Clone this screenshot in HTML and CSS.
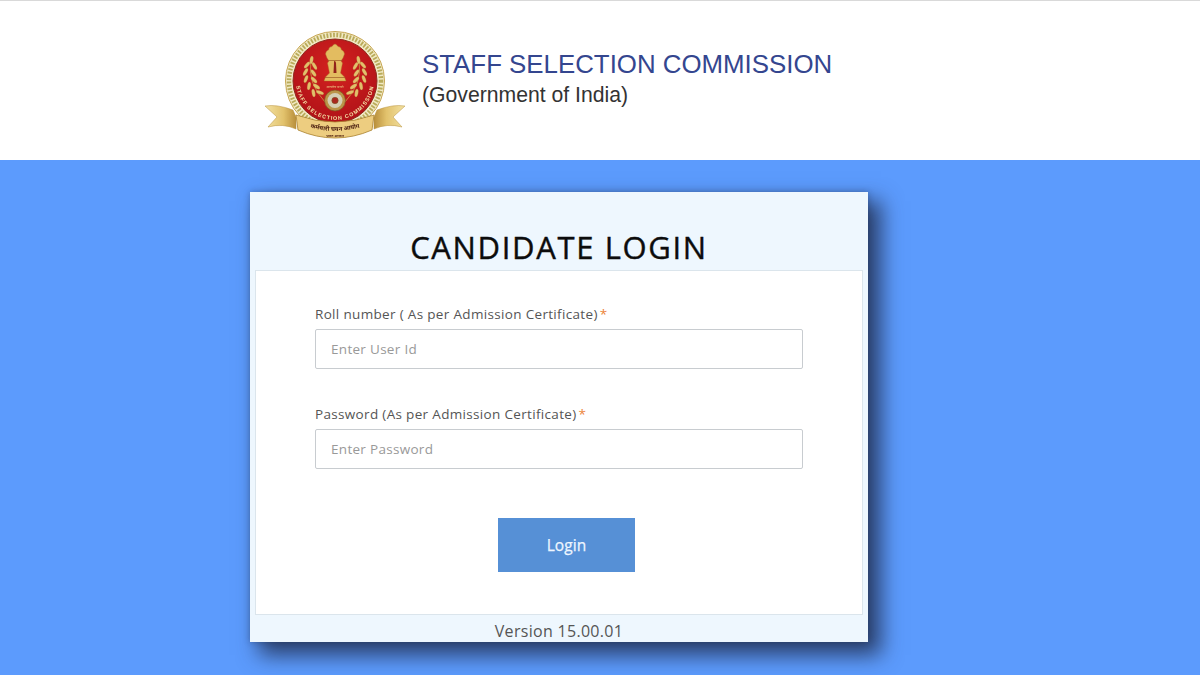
FILE: index.html
```html
<!DOCTYPE html>
<html lang="en">
<head>
<meta charset="utf-8">
<title>Candidate Login</title>
<link rel="stylesheet" href="styles.css">
</head>
<body>
<header class="site-header">
  <svg class="logo" viewBox="0 0 140 110" width="140" height="110" aria-label="SSC emblem">
    <defs>
      <path id="arcText" d="M31 50 A39 39 0 0 0 109 50"/>
      <path id="ribbonText" d="M38 94 Q70 106 102 94"/>
      <radialGradient id="red" cx="50%" cy="35%" r="65%"><stop offset="0" stop-color="#d4211f"/><stop offset="1" stop-color="#b01218"/></radialGradient>
      <linearGradient id="tailL" x1="0" x2="1" y1="0" y2="0"><stop offset="0" stop-color="#f3e2a4"/><stop offset=".6" stop-color="#e2c26c"/><stop offset="1" stop-color="#b98f3c"/></linearGradient>
      <linearGradient id="tailR" x1="1" x2="0" y1="0" y2="0"><stop offset="0" stop-color="#f3e2a4"/><stop offset=".6" stop-color="#e2c26c"/><stop offset="1" stop-color="#b98f3c"/></linearGradient>
      <g id="wreath">
        <path d="M46 29 Q42 52 60 71" fill="none" stroke="#c99a45" stroke-width=".8"/>
        <g fill="#e2c06c" stroke="#a8752c" stroke-width=".2">
          <ellipse cx="46.500" cy="29" rx="4" ry="1.700" transform="rotate(-80 46.500 29)"/>
          <ellipse cx="42" cy="34" rx="4" ry="1.700" transform="rotate(-50 42 34)"/>
          <ellipse cx="49.500" cy="35" rx="4" ry="1.700" transform="rotate(-120 49.500 35)"/>
          <ellipse cx="40.500" cy="41" rx="4" ry="1.700" transform="rotate(-60 40.500 41)"/>
          <ellipse cx="48.500" cy="42" rx="4" ry="1.700" transform="rotate(-125 48.500 42)"/>
          <ellipse cx="41" cy="48" rx="4" ry="1.700" transform="rotate(-70 41 48)"/>
          <ellipse cx="49" cy="49" rx="4" ry="1.700" transform="rotate(-135 49 49)"/>
          <ellipse cx="44" cy="55" rx="4" ry="1.700" transform="rotate(-80 44 55)"/>
          <ellipse cx="51.500" cy="55.500" rx="4" ry="1.700" transform="rotate(-145 51.500 55.500)"/>
          <ellipse cx="48.500" cy="62" rx="4" ry="1.700" transform="rotate(-100 48.500 62)"/>
          <ellipse cx="55" cy="61.500" rx="4" ry="1.700" transform="rotate(-160 55 61.500)"/>
        </g>
      </g>
    </defs>
    <circle cx="70" cy="50" r="49.500" fill="#f1e9c4" stroke="#c6a552" stroke-width="1"/>
    <circle cx="70" cy="50" r="46" fill="none" stroke="#b9ab5a" stroke-width="4.500" stroke-dasharray="1.800 1.500"/>
    <circle cx="70" cy="50" r="42" fill="url(#red)" stroke="#8e2a1e" stroke-width="1"/>
    <use href="#wreath"/>
    <use href="#wreath" transform="translate(140 0) scale(-1 1)"/>
    <path class="capital" d="M62 27 L60.500 23 Q61 19.500 63.500 19 Q64 15.500 67 15.500 Q68.500 13 70 13 Q71.500 13 73 15.500 Q76 15.500 76.500 19 Q79 19.500 79.500 23 L78 27 L76 30 L77.500 32 L76.500 37 L75.500 42 L79.500 46 L81 50 L59 50 L60.500 46 L64.500 42 L63.500 37 L62.500 32 L64 30 Z"/>
    <path d="M69 30 Q71 30 71 32 L71.500 42 L68.500 42 L69 32 Z" fill="#93231a"/>
    <path d="M60 46.500 H80 M62.500 29.500 H77.500" stroke="#9e5a24" stroke-width=".7"/>
    <text class="logo-motto" x="70" y="56.500" text-anchor="middle">सत्यमेव जयते</text>
    <circle cx="70" cy="69.500" r="10.500" fill="#ba9548" stroke="#7e5523" stroke-width=".7"/>
    <circle cx="70" cy="69.500" r="7.500" fill="#d5cfb4"/>
    <circle cx="70" cy="69.500" r="3.200" fill="#a9281f" stroke="#7e5523" stroke-width=".6"/>
    <text class="logo-arc"><textPath href="#arcText" startOffset="50%" text-anchor="middle">STAFF SELECTION COMMISSION</textPath></text>
    <path d="M0 75 Q12 73 28 79 L31 86 L31 98 Q18 92 3 96 L12 86 Z" fill="url(#tailL)" stroke="#b8933f" stroke-width=".5"/>
    <path d="M140 75 Q128 73 112 79 L109 86 L109 98 Q122 92 137 96 L128 86 Z" fill="url(#tailR)" stroke="#b8933f" stroke-width=".5"/>
    <path d="M31 84 Q70 98 109 84 L107 99 Q70 115 33 99 Z" fill="#edcd80" stroke="#a9822f" stroke-width=".8"/>
    <text class="logo-ribbon"><textPath href="#ribbonText" startOffset="50%" text-anchor="middle">कर्मचारी चयन आयोग</textPath></text>
    <text class="logo-ribbon-sub" x="70" y="106" text-anchor="middle">भारत सरकार</text>
  </svg>
  <div class="org">
    <div class="org-name">STAFF SELECTION COMMISSION</div>
    <div class="org-sub">(Government of India)</div>
  </div>
</header>
<main class="stage">
  <section class="card">
    <h1 class="card-title">CANDIDATE LOGIN</h1>
    <form class="panel">
      <div class="field">
        <label class="field-label">Roll number ( As per Admission Certificate)<span class="req">*</span></label>
        <input class="field-input" type="text" placeholder="Enter User Id">
      </div>
      <div class="field">
        <label class="field-label">Password (As per Admission Certificate)<span class="req">*</span></label>
        <input class="field-input" type="text" placeholder="Enter Password">
      </div>
      <div class="actions"><button class="login-btn" type="button">Login</button></div>
    </form>
    <div class="version">Version 15.00.01</div>
  </section>
</main>
</body>
</html>
```
FILE: styles.css
```css
* { box-sizing: border-box; }
html, body { margin: 0; padding: 0; height: 675px; overflow: hidden; }
body { font-family: "Open Sans", sans-serif; background: #5c9bfd; display: flex; flex-direction: column; }

.site-header { height: 160px; background: #fff; border-top: 1px solid #d9d9d9; display: flex; align-items: flex-start; padding: 30px 0 0 265px; }
.logo { flex: none; filter: blur(.45px); }
.org { margin-left: 17px; padding-top: 19px; font-family: "Liberation Sans", Arial, sans-serif; }
.org-name { font-size: 25.850px; line-height: 29px; color: #34468f; white-space: nowrap; }
.org-sub { font-size: 21.200px; line-height: 24px; margin-top: 4px; color: #333; white-space: nowrap; }
.capital { fill: #e3bc60; stroke: #a8752c; stroke-width: .4; }
.logo-arc { font-family: "Liberation Sans", sans-serif; font-size: 5.400px; font-weight: 700; fill: #f4e3a6; letter-spacing: 1px; }
.logo-motto { font-family: "Noto Sans", sans-serif; font-size: 3.500px; fill: #f0d58a; }
.logo-ribbon { font-family: "Noto Sans", sans-serif; font-size: 6px; font-weight: 700; fill: #4a1f10; }
.logo-ribbon-sub { font-family: "Noto Sans", sans-serif; font-size: 3.500px; font-weight: 700; fill: #5a2a14; }

.stage { flex: 1; padding: 32px 0 0 250px; }
.card { width: 618px; height: 450px; background: #eef7fe; box-shadow: 11px 11px 20px 2px rgba(30, 40, 70, .8), 0 0 6px rgba(30, 40, 70, .35); padding: 0 5px; display: flex; flex-direction: column; }
.card-title { margin: 0; height: 78px; padding-top: 35px; font-size: 31px; line-height: 40px; font-weight: 400; -webkit-text-stroke: .4px #0c0c0c; color: #0c0c0c; text-align: center; letter-spacing: 1.650px; }
.panel { height: 346px; background: #fff; border: 1px solid #dbe5ec; padding: 33px 59px 0; display: flex; flex-direction: column; }
.field { display: flex; flex-direction: column; margin-bottom: 35px; }
.field-label { font-size: 13.500px; line-height: 20px; margin-bottom: 5px; color: #555; letter-spacing: .33px; white-space: nowrap; }
.req { color: #ec8338; margin-left: 2px; }
.field-input { width: 488px; height: 40px; border: 1px solid #c8ccd0; border-radius: 2px; padding: 0 15px; font: 13.500px "Open Sans", sans-serif; letter-spacing: .3px; color: #555; background: #fff; outline: 0; }
.field-input::placeholder { color: #999; opacity: 1; }
.actions { display: flex; justify-content: center; margin-top: 14px; padding-left: 15px; }
.login-btn { width: 137px; height: 54px; border: 0; background: #5690d6; color: #eef6ff; font: 400 15.500px "Open Sans", sans-serif; -webkit-text-stroke: .25px #eef6ff; letter-spacing: .1px; }
.version { text-align: center; font-size: 16px; line-height: 32px; color: #555; height: 27px; letter-spacing: .3px; }
```
